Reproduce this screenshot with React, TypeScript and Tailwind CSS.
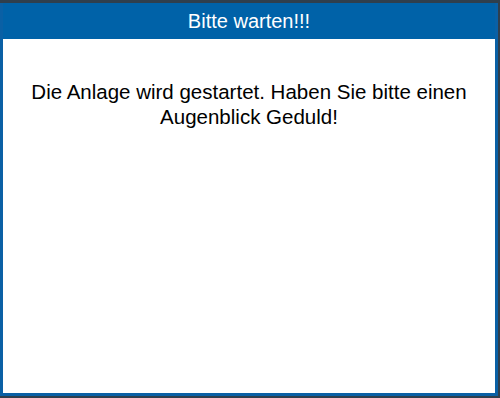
export default function App() {
  return (
    <div className="h-[398px] w-[500px] bg-[#2f3f4d] pt-[3px] pb-[2px] pr-[2px] font-['Liberation_Sans',Arial,sans-serif]">
      <div className="flex h-full flex-col border-[3px] border-t-0 border-[#0a60a5] bg-white">
        <div className="flex h-[36px] items-center justify-center bg-[#0062a8] text-[20px] text-white">
          Bitte warten!!!
        </div>
        <div className="flex-1 px-4 pt-[40px] text-center text-[20.5px] leading-[25px] text-black">
          Die Anlage wird gestartet. Haben Sie bitte einen Augenblick Geduld!
        </div>
      </div>
    </div>
  );
}
